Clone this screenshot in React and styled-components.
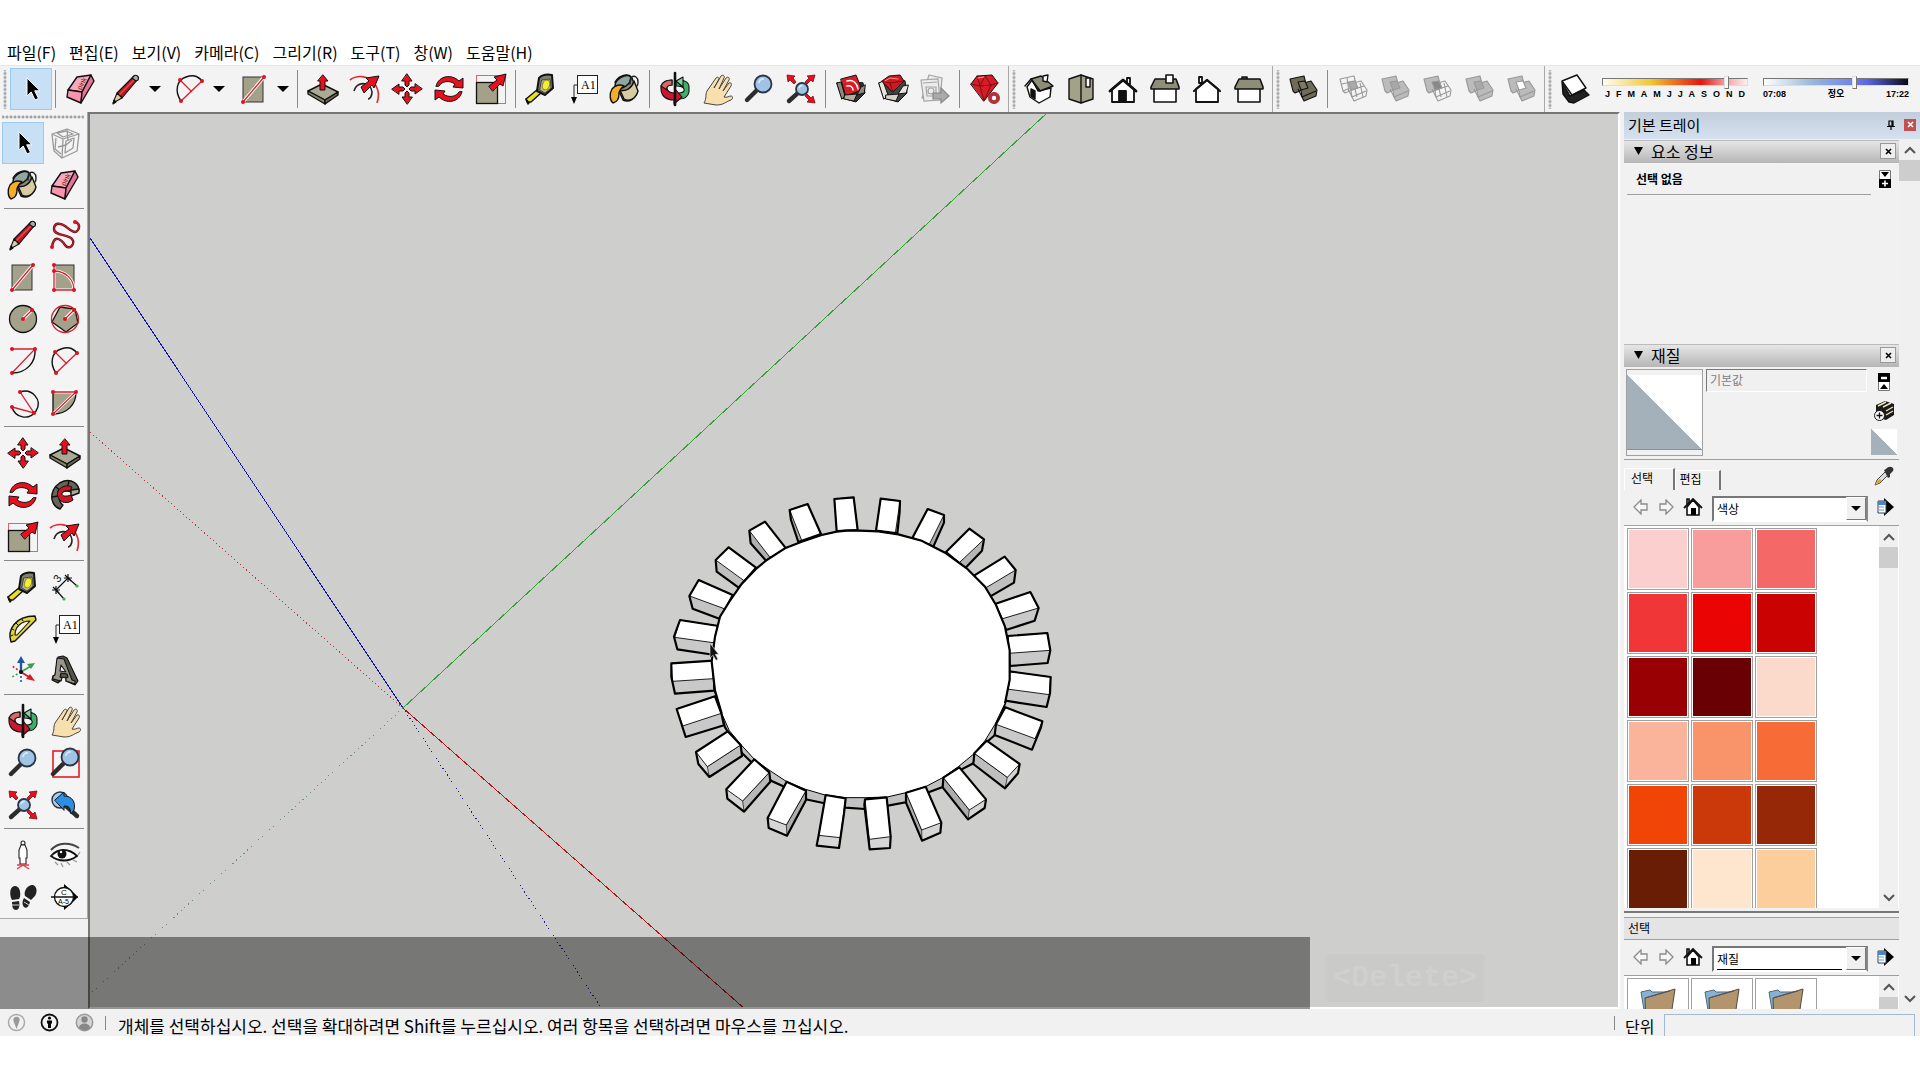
import React from "react";
import styled, { createGlobalStyle, css } from "styled-components";

const GlobalStyle = createGlobalStyle`
  * { box-sizing: border-box; }
  html, body { margin: 0; height: 100%; background: #fff; overflow: hidden; }
  body { font-family: "Noto Sans CJK KR", "Liberation Sans", sans-serif; color: #000; }
  button, input, select { font: inherit; color: inherit; margin: 0; }
`;

const App_ = styled.div`
  display: flex;
  flex-direction: column;
  height: 100vh;
  padding: 42px 0 44px;
`;

const MenuBar = styled.nav`
  display: flex;
  align-items: center;
  gap: 13px;
  height: 23px;
  padding: 0 0 3px 7px;
`;

const MenuItem = styled.button`
  padding: 0;
  border: 0;
  background: none;
  font-size: 16px;
  line-height: 20px;
  white-space: nowrap;
`;

const TopBar = styled.div`
  display: flex;
  height: 47px;
  background: #f3f3f3;
  border-top: 1px solid #e6e6e6;
`;

const ToolGroup = styled.div`
  display: flex;
  align-items: center;
  padding-right: ${(p) => (p.$last ? 0 : 2)}px;
  border-right: ${(p) => (p.$last ? 0 : 1)}px solid #a8a8a8;
  flex: ${(p) => (p.$last ? "1" : "none")};
`;

const Grip = styled.span`
  align-self: stretch;
  width: ${(p) => (p.$wide ? 10 : 9)}px;
  margin: 4px 0 3px;
  background: radial-gradient(circle, #a4a4a4 1px, transparent 2px) center / 4px 4px repeat-y;
`;

const ToolButton = styled.button`
  display: flex;
  align-items: center;
  justify-content: center;
  width: 42px;
  height: 42px;
  padding: 0 0 0 ${(p) => (p.$split ? 5 : 0)}px;
  border: 1px solid ${(p) => (p.$active ? "#99cbf3" : "transparent")};
  background: ${(p) => (p.$active ? "#c8e0f6" : "none")};
`;

const DropButton = styled.button`
  display: flex;
  align-items: center;
  justify-content: center;
  width: 22px;
  height: 42px;
  padding: 0;
  border: 0;
  background: none;
`;

const Divider = styled.span`
  width: 1px;
  height: 38px;
  margin: 0 4px 0 3px;
  background: #8a8a8a;
`;

const SunControls = styled.div`
  display: flex;
  align-items: center;
  gap: 15px;
  padding: 2px 0 0 6px;
`;

const SunField = styled.label`
  display: flex;
  flex-direction: column;
  width: 146px;
  font: bold 9px/16px "Liberation Sans", "Noto Sans CJK KR", sans-serif;
`;

const SunSlider = styled.input`
  appearance: none;
  width: 100%;
  height: 8px;
  border: 1px solid;
  border-color: #777 #ddd #ddd #777;
  background: ${(p) => p.$track};
  &::-webkit-slider-thumb {
    appearance: none;
    width: 5px;
    height: 13px;
    background: #f8f8f8;
    border: 1px solid;
    border-color: #ddd #777 #777 #ddd;
  }
`;

const Scale = styled.span`
  display: flex;
  justify-content: space-between;
  padding: 0 ${(p) => p.$inset}px;
`;

const Main = styled.main`
  position: relative;
  display: flex;
  flex: 1;
  min-height: 0;
  background: #f1f1f1;
`;

const SideBar = styled.aside`
  width: 88px;
  flex: none;
`;

const Palette = styled.div`
  padding: 0 1px 0 2px;
  background: #f4f4f4;
  border-right: 1px solid #a8a8a8;
  border-bottom: 1px solid #a8a8a8;
`;

const PaletteGrip = styled.div`
  height: 10px;
  margin-right: 2px;
  background: radial-gradient(circle, #a4a4a4 1px, transparent 2px) center / 4px 4px repeat-x;
`;

const PaletteGroup = styled.div`
  display: grid;
  grid-template-columns: 42px 42px;
  & + & { padding-top: 2px; }
  & + &::before {
    content: "";
    grid-column: 1 / -1;
    height: 1px;
    margin: 0 2px 5px;
    background: #8a8a8a;
  }
`;

const Viewport = styled.section`
  flex: 1;
  min-width: 0;
  overflow: hidden;
  background: #cececc;
  border: 2px solid;
  border-color: #777 #fff #fff #777;
  svg { display: block; width: 100%; height: 100%; }
`;

const Caption = styled.div`
  position: absolute;
  left: 0;
  bottom: 0;
  width: 1310px;
  height: 72px;
  background: rgba(0, 0, 0, 0.42);
`;

const KeyBadge = styled.div`
  position: absolute;
  left: 1325px;
  bottom: 7px;
  padding: 0 8px;
  border-radius: 5px;
  background: #cacac8;
  color: #d0d0ce;
  font: bold 30px/48px "Liberation Mono", monospace;
`;

const Tray = styled.aside`
  display: flex;
  flex-direction: column;
  flex: 0 0 300px;
  padding-left: 4px;
`;

const TrayTitle = styled.header`
  display: flex;
  align-items: center;
  gap: 9px;
  height: 27px;
  padding: 0 4px 2px 4px;
  background: linear-gradient(#c3cedd, #d6e1f0);
  font-size: 15px;
  span { flex: 1; }
`;

const PlainButton = styled.button`
  display: flex;
  align-items: center;
  justify-content: center;
  padding: 0;
  border: 0;
  background: none;
`;

const CloseTray = styled(PlainButton)`
  width: 12px;
  height: 12px;
  background: #c1504f;
`;

const TrayBody = styled.div`
  display: flex;
  flex: 1;
  min-height: 0;
`;

const Panels = styled.div`
  display: flex;
  flex: 1;
  flex-direction: column;
  min-width: 0;
  padding-top: 1px;
`;

const PanelTitle = styled.h2`
  display: flex;
  align-items: center;
  gap: 8px;
  height: 23px;
  margin: 0;
  padding: 0 3px 2px 10px;
  background: linear-gradient(#e6e6e6, #b6b6b6);
  border-top: 1px solid #bbb;
  font-size: 16px;
  font-weight: normal;
  line-height: 20px;
  span { flex: 1; }
`;

const PanelClose = styled(PlainButton)`
  width: 16px;
  height: 16px;
  border: 1px solid #999;
  background: #eee;
`;

const InfoPanel = styled.div`
  height: 181px;
  padding: 0 3px;
`;

const InfoRow = styled.div`
  display: flex;
  align-items: center;
  justify-content: space-between;
  height: 31px;
  padding: 0 5px 0 9px;
  font-size: 12px;
  font-weight: bold;
`;

const InfoRule = styled.hr`
  height: 1px;
  margin: 0 25px 0 0;
  border: 0;
  background: #a0a0a0;
`;

const MaterialTop = styled.div`
  display: flex;
  gap: 3px;
  height: 93px;
  padding: 2px 1px 0 2px;
  border-bottom: 1px solid #a0a0a0;
`;

const Preview = styled.div`
  width: 77px;
  height: 87px;
  padding: 5px 0;
  border: 1px solid #a0a0a0;
  div {
    height: 75px;
    border-bottom: 1px solid #8e8e8e;
    background: linear-gradient(to top right, #a4b1ba 50%, #fff 50%);
  }
`;

const MaterialName = styled.input`
  flex: 1;
  min-width: 0;
  height: 23px;
  padding: 0 3px 3px;
  border: 1px solid;
  border-color: #777 #fff #fff #777;
  background: #f0f0f0;
  color: #808080;
  font-size: 12px;
`;

const SideActions = styled.div`
  display: flex;
  flex-direction: column;
  align-items: center;
  gap: 6px;
  width: 28px;
  padding-top: 4px;
`;

const MiniSwatch = styled.button`
  width: 26px;
  height: 26px;
  padding: 0;
  border: 0;
  background: linear-gradient(to top right, #a4b1ba 50%, #fff 50%);
`;

const TabRow = styled.div`
  display: flex;
  align-items: flex-end;
  height: 30px;
  padding-right: 5px;
`;

const Tab = styled.button`
  width: ${(p) => (p.$active ? 51 : 46)}px;
  height: ${(p) => (p.$active ? 22 : 20)}px;
  padding: 0 14px 3px 0;
  border: 1px solid #fff;
  border-right: 2px solid #777;
  border-bottom: 0;
  background: #f1f1f1;
  font-size: 12px;
  line-height: 16px;
`;

const DropperButton = styled.button`
  align-self: flex-start;
  display: flex;
  padding: 6px 0 0;
  border: 0;
  background: none;
`;

const Spacer = styled.span`
  flex: 1;
`;

const NavRow = styled.div`
  display: flex;
  align-items: center;
  justify-content: space-between;
  height: 36px;
  padding: 0 5px 2px 9px;
  border-bottom: 1px solid #a0a0a0;
`;

const Combo = styled.label`
  position: relative;
  display: block;
  width: 156px;
  margin-top: 4px;
  select {
    appearance: none;
    width: 100%;
    height: 26px;
    padding: 0 26px 2px 3px;
    border: 2px solid;
    border-color: #777 #888 #fff #777;
    border-radius: 0;
    background: ${(p) =>
      p.$focused ? "linear-gradient(#000, #000) 3px 21px / 125px 1px no-repeat #fff" : "#fff"};
    font-size: 12px;
  }
`;

const ComboArrow = styled.span`
  position: absolute;
  top: 2px;
  right: 2px;
  display: flex;
  align-items: center;
  justify-content: center;
  width: 20px;
  height: 23px;
  border: 1px solid;
  border-color: #fff #777 #777 #fff;
  background: #f0f0f0;
  pointer-events: none;
`;

const ListBox = styled.div`
  display: flex;
  justify-content: space-between;
  overflow: hidden;
  padding-right: 1px;
  background: #fff;
  ${(p) => (p.$grow ? css`flex: 1; min-height: 0;` : css`height: 382px;`)}
`;

const SwatchGrid = styled.div`
  display: grid;
  grid-template-columns: repeat(3, 62px);
  grid-auto-rows: 62px;
  gap: 2px;
  padding: 2px 0 0 3px;
`;

const Swatch = styled.button`
  padding: 1px;
  border: 1px solid #a0a0a0;
  background: ${(p) => p.$color || "#fff"} content-box;
`;

const ScrollBar = styled.div`
  display: flex;
  flex-direction: column;
  align-items: center;
  width: ${(p) => p.$width}px;
  padding-bottom: 4px;
  background: #f0f0f0;
  flex: none;
`;

const ScrollArrow = styled(PlainButton)`
  width: 100%;
  height: ${(p) => (p.$down ? 13 : 21)}px;
  flex: none;
`;

const Thumb = styled.div`
  width: 100%;
  height: 21px;
  flex: none;
  background: #cdcdcd;
`;

const Splitter = styled.div`
  height: 10px;
  flex: none;
  border-bottom: 1px solid #a0a0a0;
  background: linear-gradient(#f1f1f1 3px, #777 3px, #777 5px, #f1f1f1 5px);
`;

const ListTitle = styled.h3`
  height: 22px;
  margin: 0;
  padding-left: 4px;
  border-bottom: 1px solid #a0a0a0;
  background: #e4e4e4;
  font-size: 12px;
  font-weight: normal;
  line-height: 20px;
`;

const StatusBar = styled.footer`
  display: flex;
  align-items: center;
  height: 27px;
  padding: 0 5px 0 1px;
  background: #f1f1f1;
  font-size: 17px;
  line-height: 24px;
  white-space: nowrap;
`;

const StatusButton = styled(PlainButton)`
  width: 35px;
  height: 24px;
  &:first-child { width: 31px; }
`;

const StatusMark = styled.span`
  width: 1px;
  height: 14px;
  margin: 0 ${(p) => (p.$right ? 10 : 12)}px 0 ${(p) => (p.$right ? 0 : 3)}px;
  background: #888;
`;

const StatusText = styled.span`
  flex: 1;
  padding-top: 5px;
  height: 27px;
`;

const Measure = styled.label`
  display: flex;
  gap: 10px;
  width: 290px;
  height: 27px;
  padding-top: 5px;
  font-size: 16px;
  input {
    flex: 1;
    min-width: 0;
    border: 1px solid #a6b9cb;
    border-bottom: 0;
    background: #f1f1f1;
  }
`;

const R = "#e8101c";
const OL = { stroke: "#111", strokeWidth: 1.4, strokeLinejoin: "round", strokeLinecap: "round" };
const RL = { stroke: "#d4202c", strokeWidth: 1.3, fill: "none" };
const TAUPE = "#a3a18a";
const Dot = ({ x, y }) => <circle cx={x} cy={y} r="2" fill="#e01020" />;
const glass = (cx, cy, r, hx, hy) => (
  <g>
    <path d={`M${cx - r * 0.7} ${cy + r * 0.7}L${hx} ${hy}`} stroke="#2c2c2c" strokeWidth="4.4" strokeLinecap="round" />
    <circle cx={cx} cy={cy} r={r} fill="#9fc4e6" stroke="#2b3644" strokeWidth="1.8" />
    <path d={`M${cx - r * 0.5} ${cy - r * 0.1}a${r * 0.55} ${r * 0.55} 0 0 1 ${r * 0.6} ${-r * 0.5}`} stroke="#d8eafa" fill="none" strokeWidth="1.6" />
  </g>
);
const solidPair = (f, s, mid, wireA, wireB) => (
  <g strokeLinejoin="round" stroke={s} strokeWidth="1.1">
    <path d="M3 6l14-3 3 12-12 5-2-2z" fill={wireA ? "none" : f} />
    <path d="M13 11l11-3 6 9-1 6-12 5-2-4z" fill={wireB ? "none" : f} />
    <path d="M15 24l14-6M15 24l-4-8" fill="none" />
    {wireA && <path d="M5 11l13-3M10 5l2 14M6 18l12-5" fill="none" />}
    {wireB && <path d="M17 12l3 12M23 10l3 14M14 17l13-4" fill="none" />}
    <path d="M11 9l7-1 3 7-7 2z" fill={mid} />
  </g>
);

const ART = {
  select: <path d="M12 5v18l4.200-4 3.800 8 3.500-1.600-3.800-7.600H25z" fill="#000" stroke="#fff" strokeWidth="1" />,
  eraser: (
    <g {...OL}>
      <path d="M12 4l14-2-9 17-14-2z" fill="#f8a8bc" />
      <path d="M3 17l14 2-1 11L2 24z" fill="#f794ae" />
      <path d="M26 2l3 6-13 22 1-11z" fill="#e87493" />
      <text x="11" y="13" fontSize="7" stroke="none" fill="#611" fontFamily="Liberation Sans" transform="rotate(-62 17 11)">pink</text>
    </g>
  ),
  pencil: (
    <g {...OL} strokeWidth="1.1">
      <path d="M7 20L24 3l4 3-16 19z" fill="#b91822" />
      <path d="M9 22L26 5" stroke="#ec4a50" strokeWidth="1.4" />
      <path d="M24 3c1-2 6 0 4 4l-2 1-4-3z" fill="#b5aaaa" />
      <path d="M7 20l5 5-9 5z" fill="#dccda6" />
      <path d="M4 27l2 2-3 2z" fill="#111" />
    </g>
  ),
  arc2: (
    <g>
      <path d="M7 28C0 18 3 7 12 4s13 0 17 5" fill="none" stroke="#111" strokeWidth="1.400" />
      <path d="M7 28L28 8M6 7l12 12" {...RL} />
      <Dot x="7" y="28" /><Dot x="28" y="8" /><Dot x="6" y="7" />
    </g>
  ),
  rect: (
    <g>
      <rect x="5" y="4" width="20" height="25" fill={TAUPE} stroke="#333" />
      <path d="M5 29L26 4" stroke="#fff" strokeWidth="3.400" />
      <path d="M5 29L26 4" {...RL} />
      <Dot x="5" y="29" /><Dot x="26" y="4" />
    </g>
  ),
  push: (
    <g {...OL}>
      <path d="M1 18l14-7 16 8-13 8z" fill="#aaa993" />
      <path d="M1 18l17 9v4L1 21z" fill="#85846f" />
      <path d="M18 27l13-8v3l-13 9z" fill="#696853" />
      <path d="M16 2l5 6h-3v9h-5V8h-2z" fill={R} strokeWidth="1" />
    </g>
  ),
  offset: (
    <g fill="none" strokeWidth="1.6">
      <path d="M1 7C14-3 35 10 28 30" stroke="#df2a35" />
      <path d="M5 18c2-10 17-10 18 1 0 4-2 7-4 7" stroke="#222" />
      <path d="M12 14l8-6-3-3 13-2-5 12-2-3-8 8z" fill={R} stroke="#111" strokeWidth="1" />
    </g>
  ),
  move: (
    <g fill={R} {...OL} strokeWidth="1">
      {[0, 90, 180, 270].map((a) => (
        <path key={a} d="M16 1l5 7h-3v4l-2 2-2-2V8h-3z" transform={`rotate(${a} 16 16)`} />
      ))}
    </g>
  ),
  rotate: (
    <g fill={R} {...OL} strokeWidth="1">
      <path d="M3 13C6 2 19 1 26 8l4-3v10l-10-1 2-3C16 7 9 8 6 13z" />
      <path d="M29 19c-3 11-16 12-23 5l-4 3V17l10 1-2 3c6 4 13 3 16-2z" />
    </g>
  ),
  scale: (
    <g>
      <rect x="1.500" y="2.500" width="29" height="28" fill="none" stroke="#e0646c" />
      <rect x="1.500" y="9.500" width="21" height="21" fill={TAUPE} stroke="#111" strokeWidth="1.300" />
      <path d="M14 13l8-6-3-3 12-3-3 12-3-2-7 7z" fill={R} {...OL} strokeWidth="1" />
    </g>
  ),
  tape: (
    <g {...OL}>
      <path d="M1 26l12-10 3 4L6 29H2z" fill="#e8dc25" />
      <path d="M1 26l3 4-1 1z" fill="#111" />
      <path d="M14 5c4-4 8-4 13-3l1 13-8 7-8-4z" fill="#7f7f72" strokeWidth="2" />
      <path d="M17 7l8-1 1 9-6 5-5-3z" fill="#bbb79c" strokeWidth=".6" />
      <ellipse cx="21" cy="12" rx="3.500" ry="5" fill="#f5ee2d" stroke="#8b8320" strokeWidth="1" transform="rotate(20 21 12)" />
    </g>
  ),
  text: (
    <g>
      <rect x="10.500" y="2.500" width="20" height="18" fill="#fff" stroke="#222" />
      <text x="14" y="16" fontSize="12" fontFamily="Liberation Serif">A1</text>
      <path d="M10 12H7v13" fill="none" stroke="#222" />
      <path d="M4 24h6l-3 7z" />
    </g>
  ),
  bucket: (
    <g {...OL}>
      <path d="M6 9C11 1 20 0 23 5l5 13c-1 8-8 12-14 9z" fill="#8d8d7c" />
      <path d="M11 17c6 2 12-2 14-9l4 10c-2 8-9 11-14 8z" fill="#d7cba1" />
      <ellipse cx="14" cy="9" rx="9" ry="5" transform="rotate(-34 14 9)" fill="#8fa7a4" />
      <path d="M21 11c-1-6 3-9 6-7s2 8 1 9" fill="none" stroke="#222" />
      <path d="M3 16c3-4 8-5 12-3-3 2-5 4-5 8s-2 8-6 9c-3-2-4-9-1-14z" fill="#f5ad27" />
    </g>
  ),
  orbit: (
    <g {...OL} strokeWidth="1.1">
      <path d="M17 8c8-2 13 1 13 6v5c-1 5-5 7-10 7v-6c4 0 6-2 5-4-1-3-4-3-8-3z" fill="#3fae69" />
      <path d="M2 13c2-5 6-6 11-6v5c-3 0-6 1-5 4 1 3 5 4 8 4v-4l7 8-8 7v-4C7 27 1 23 2 13z" fill="#cb1830" />
      <path d="M2 13c2-5 6-6 11-6v5c-4 0-6 2-5 5z" fill="#d96865" />
      <path d="M16 0v32" strokeWidth="2.600" />
      <path d="M17 8l7-4v10z" fill="#7fd3a0" />
    </g>
  ),
  pan: (
    <path d="M3 30c3-5 1-8 3-12L15 5c2-2 4 0 2 3l-4 7L20 3c2-2 4 0 3 2l-5 11 7-11c2-2 4 0 3 2l-6 11 6-8c2-1 3 1 2 3l-7 11c3 1 5-1 7-1s2 3 0 4c-6 2-7 5-15 5z" fill="#f8dfae" stroke="#444" strokeWidth="1" strokeLinejoin="round" />
  ),
  zoom: glass(20, 11, 8.500, 4, 27),
  extents: (
    <g>
      {glass(17, 16, 6, 4, 28)}
      <g fill={R} stroke="#7a0c12" strokeWidth=".8">
        <path d="M2 2l8 1-2 2 3 4-2 2-4-4-2 2z" />
        <path d="M30 2l-8 1 2 2-4 4 2 2 4-4 2 2z" />
        <path d="M30 30l-8-1 2-2-4-4 2-2 4 4 2-2z" />
      </g>
    </g>
  ),
  warehouse: (
    <g {...OL} strokeWidth="1">
      <path d="M2 10l5 15 14 4 9-9-2-10z" fill="#333" />
      <path d="M6 6l15-4 6 15-16 6z" fill="#d71d26" />
      <path d="M12 8c6-2 10 2 11 8M12 13c3-1 6 1 6 4" fill="none" stroke="#fff" strokeWidth="1.500" />
      <path d="M2 10l4-1 4 14-3 3zM30 12l-4 2-4 8 7-2z" fill="#8d8982" />
      <path d="M10 22l12-1-3 7-10-2z" fill="#b5aca0" />
    </g>
  ),
  extBox: (
    <g {...OL} strokeWidth="1">
      <path d="M2 10l5 15 14 4 9-9-2-12z" fill="#444" />
      <path d="M2 10l4-2 5 14-4 4zM31 12l-5 1-5 8 8-1z" fill="#e7e4df" />
      <path d="M5 8l7-5 11-1 4 6-11 11z" fill="#d21720" />
      <path d="M5 8l8 2 14-2M13 10l3 9" stroke="#7c0b10" fill="none" />
      <path d="M8 8l5-3 8 1" stroke="#ff8d8d" fill="none" />
      <path d="M9 22l13-1-3 7-10-2z" fill="#d7d2c8" />
    </g>
  ),
  sendLayout: (
    <g fill="#ececec" stroke="#a5a5a5" strokeWidth="1.200">
      <path d="M10 2l13 3-2 22-18-2z" /><path d="M2 7l17-1 2 21-16 1z" />
      <path d="M4 10l14-1M7 14h10v9H8z" fill="none" /><circle cx="12" cy="18" r="3" />
      <path d="M14 20h8v-5l8 8-8 7v-4h-8z" fill="#aaa" stroke="#888" />
    </g>
  ),
  extManager: (
    <g {...OL} strokeWidth="1">
      <path d="M2 11l6-8 15-1 6 8-14 18z" fill="#d81c27" />
      <path d="M2 11l9 2 11-1 7-2M11 13l4 15 7-16M8 3l3 10 5-10 6 9" fill="none" stroke="#7d0d12" />
      <path d="M9 5l6-1" stroke="#ff9b9b" />
      <circle cx="25" cy="25" r="4.500" fill="#fff" stroke="#b3323a" strokeWidth="3" strokeDasharray="2.500 1" />
      <circle cx="25" cy="25" r="3" fill="none" stroke="#b3323a" strokeWidth="1.600" />
    </g>
  ),
  iso: (
    <g {...OL} strokeWidth="1.400">
      <path d="M4 14l5-7 6 11 13-3-1 9-11 6-9-6z" fill="#fff" />
      <path d="M8 6l10-3 12 10-13 5z" fill="#8e8d78" /><path d="M8 6L2 13M8 6l9 12" fill="none" />
      <path d="M8 16l4 2v8l-4-3z" fill="#111" /><path d="M20 3l5-1-1 7-4-1z" fill="#fff" />
    </g>
  ),
  topv: (
    <g {...OL}>
      <path d="M4 6l12-4 12 4v20l-12 4-12-4z" fill={TAUPE} /><path d="M16 2v28" />
      <rect x="21" y="5" width="4" height="9" fill="#fff" />
    </g>
  ),
  front: (
    <g {...OL} strokeWidth="1.800">
      <path d="M20 5h3v6h-3z" fill="#fff" /><path d="M5 16L16 7l11 9v13H5z" fill="#fff" />
      <path d="M3 18L16 7l13 11" fill="none" strokeWidth="2.800" /><path d="M12 29V18h7v11z" fill="#111" />
    </g>
  ),
  right: (
    <g {...OL} strokeWidth="1.600">
      <path d="M5 15h22v14H5z" fill="#fff" /><path d="M6 6h21l3 8v2H2v-2z" fill="#8e8d78" />
      <path d="M17 2h7v8h-7z" fill="#fff" />
    </g>
  ),
  back: (
    <g {...OL} strokeWidth="1.800">
      <path d="M8 4h3v6H8z" fill="#fff" /><path d="M5 16L16 7l11 9v13H5z" fill="#fff" />
      <path d="M3 18L16 7l13 11" fill="none" strokeWidth="2.200" />
    </g>
  ),
  leftv: (
    <g {...OL} strokeWidth="1.600">
      <path d="M9 4h5v3H9z" fill="#777" /><path d="M5 15h22v14H5z" fill="#fff" />
      <path d="M6 6h21l3 8v2H2v-2z" fill="#8e8d78" />
    </g>
  ),
  shell: solidPair("#6f6b56", "#111", "#7d7963"),
  intersect: solidPair("#eee", "#999", "#aaa", true, true),
  union: solidPair("#bbb", "#999", "#a8a8a8"),
  subtract: solidPair("#bbb", "#999", "#888", false, true),
  trim: solidPair("#bbb", "#999", "#aaa"),
  split: solidPair("#bbb", "#999", "#fff"),
  shadow: (
    <g {...OL}>
      <path d="M3 9l8 14 14-6 5 5-15 8-5-1-6-8z" fill="#222" />
      <path d="M3 8l15-6 9 13-14 7z" fill="#fff" />
    </g>
  ),
  component: (
    <g fill="none" stroke="#999" strokeWidth="1.300" strokeLinejoin="round">
      <path d="M3 7l15-5 12 5-2 17-15 7L5 24zM3 7l11 5 16-5M14 12l-1 19" />
      <path d="M7 11l-1 11 6 5M17 14l8-3-1 10-8 5zM8 6l9-2 7 3-10 3z" />
      <path d="M9 20l8-2 6-5M18 2l1 12" />
    </g>
  ),
  freehand: (
    <g>
      <path d="M3 28c2-13 9-8 13-2s11-1 7-6S5 17 5 10 12 4 16 7s10 9 13 4-1-8-3-8" fill="none" stroke="#501016" strokeWidth="2.400" />
      <path d="M3 28c2-13 9-8 13-2s11-1 7-6S5 17 5 10 12 4 16 7s10 9 13 4-1-8-3-8" fill="none" stroke="#d51c2a" strokeWidth="1.200" />
      <Dot x="3" y="28" /><Dot x="26" y="3" />
    </g>
  ),
  rotRect: (
    <g>
      <rect x="5" y="4" width="20" height="25" fill={TAUPE} stroke="#333" />
      <path d="M5 4v25h20C25 18 16 10 5 10" stroke="#fff" strokeWidth="3" fill="none" />
      <path d="M5 4v25h20C25 18 16 10 5 10" {...RL} />
      <Dot x="5" y="4" /><Dot x="5" y="10" /><Dot x="5" y="29" /><Dot x="25" y="29" />
    </g>
  ),
  circle: (
    <g>
      <circle cx="16" cy="16" r="13.500" fill={TAUPE} stroke="#111" strokeWidth="1.300" />
      <path d="M16 16l9-9" stroke="#fff" strokeWidth="3.400" /><path d="M16 16l9-9" {...RL} />
      <Dot x="16" y="16" /><Dot x="25" y="7" />
    </g>
  ),
  polygon: (
    <g>
      <path d="M11 4l15 2 3 14-12 9L3 19z" fill={TAUPE} stroke="#111" strokeWidth="1.300" />
      <circle cx="16" cy="16" r="13.500" {...RL} />
      <path d="M16 16l9-9" stroke="#fff" strokeWidth="3.400" /><path d="M16 16l9-9" {...RL} />
      <Dot x="16" y="16" /><Dot x="25" y="7" />
    </g>
  ),
  arc: (
    <g>
      <path d="M28 4c1 13-8 24-23 24" fill="none" stroke="#111" strokeWidth="1.400" />
      <path d="M5 4h23L5 28" {...RL} /><Dot x="5" y="4" /><Dot x="28" y="4" /><Dot x="5" y="28" />
    </g>
  ),
  arc3: (
    <g>
      <path d="M13 5c12-4 23 8 16 19-7 10-21 7-24-4" fill="none" stroke="#111" strokeWidth="1.400" />
      <path d="M13 5l14 21L5 20" {...RL} /><Dot x="13" y="5" /><Dot x="27" y="26" /><Dot x="5" y="20" />
    </g>
  ),
  pie: (
    <g>
      <path d="M4 5h23c0 13-9 22-23 22z" fill={TAUPE} stroke="#111" strokeWidth="1.300" />
      <path d="M4 5h23L4 27" stroke="#fff" strokeWidth="3" fill="none" /><path d="M4 5h23L4 27" {...RL} />
      <Dot x="4" y="5" /><Dot x="27" y="5" /><Dot x="4" y="27" />
    </g>
  ),
  follow: (
    <g {...OL}>
      <path d="M11 30C-2 25 1 6 15 2c8-2 15 3 15 10l-7 3c-1-4-10-4-12 1-2 4 0 8 3 10z" fill="#66655a" />
      <path d="M22 11l8-1v4l-8 3z" fill="#aaa993" /><path d="M3 18l6-1M7 8l5 4M20 2l-2 8" fill="none" />
      <path d="M9 12c4-6 10-6 14-4l-2 4c-5-1-8 1-8 3s4 3 9 1l2 5c-5 4-12 3-14-1-2-3-2-6-1-8z" fill="#c91822" strokeWidth="1" />
    </g>
  ),
  dimension: (
    <g stroke="#111" fill="none" strokeWidth="1.200">
      <path d="M7 19L19 7M7 19l8 9M19 7l9 8" /><path d="M3 19h8M7 15v8M15 7h8M19 3v8M4 16l6 6M16 4l6 6" />
      <text x="9" y="11" textAnchor="middle" fontSize="11" stroke="none" fill="#111" fontFamily="Liberation Sans" transform="rotate(-50 9 8)">3</text>
      <circle cx="15" cy="28" r="1.600" fill="#39b54a" stroke="none" /><circle cx="28" cy="15" r="1.600" fill="#39b54a" stroke="none" />
    </g>
  ),
  protractor: (
    <g {...OL}>
      <path d="M4 29C0 17 8 3 28 3l1 4L8 28z" fill="#e5d53c" />
      <path d="M8 22c0-8 6-14 15-14L10 22z" fill="#f4f4f4" strokeWidth="1.1" />
      <path d="M4 23l2-1M5 16l2 1M9 10l2 2M15 6l1 2" strokeWidth="1" />
    </g>
  ),
  axes: (
    <g strokeWidth="1.600" fill="none">
      <path d="M14 17V7" stroke="#2454a5" strokeWidth="2.400" /><path d="M14 1l4 7h-8z" fill="#2454a5" />
      <path d="M14 17l10-6" stroke="#3d9b4b" /><path d="M28 8l-4 6-4-5z" fill="#3d9b4b" />
      <path d="M14 17l8 5" stroke="#d31e29" strokeWidth="2" /><path d="M28 26l-9-2 4-5z" fill="#d31e29" />
      <path d="M14 17v12" stroke="#2454a5" strokeDasharray="2 2" /><path d="M14 17L5 22" stroke="#3d9b4b" strokeDasharray="2 2" />
      <path d="M14 17L5 11" stroke="#d31e29" strokeDasharray="2 2" /><circle cx="14" cy="17" r="2" fill="#111" />
    </g>
  ),
  text3d: (
    <g {...OL} strokeWidth="1.1">
      <path d="M9 2l5-1 4 2 11 23-3 4-9-4v-3l-5-1v3l-3 3-6-3 1-4 2-1z" fill="#55544a" />
      <path d="M8 3l7 1 8 21 3 1v3l-9-3v-3l2-1-1-3-6-1-1 4 2 1-1 3-8-2v-3l2-1z" fill="#98968a" />
      <path d="M12 10l-1 6 6 1z" fill="#f4f4f4" />
    </g>
  ),
  zoomWin: (
    <g><rect x="4" y="4" width="26" height="26" fill="none" stroke="#e01d29" strokeWidth="1.600" />{glass(21, 10, 8.500, 4, 27)}</g>
  ),
  prev: (
    <g>
      <path d="M17 17l11 10" stroke="#2c2c2c" strokeWidth="4.400" strokeLinecap="round" />
      <circle cx="11" cy="11" r="8" fill="#a9cae8" stroke="#2b3644" strokeWidth="1.400" />
      <path d="M6 11l9-8v4c8 0 12 6 10 14l-3 4c-1-7-2-8-7-8v4z" fill="#2d8fe3" {...OL} strokeWidth="1" />
    </g>
  ),
  camera: (
    <g fill="#fff" stroke="#222" strokeWidth="1.100">
      <circle cx="16" cy="4" r="2" /><path d="M14 6h4l2 5v8h-1v6h-6v-6h-1v-8z" />
      <path d="M10 30l6-4 6 4M10 26h12" stroke="#e04048" strokeWidth="1.400" fill="none" />
    </g>
  ),
  look: (
    <g>
      <path d="M2 11C9 3 21 3 30 9" stroke="#444" strokeWidth="2" fill="none" />
      <path d="M2 17C9 9 20 9 28 17c-8 6-18 6-26 0z" fill="#fff" stroke="#111" strokeWidth="1.800" />
      <circle cx="13" cy="15" r="4.500" fill="#111" /><circle cx="12" cy="13" r="1.200" fill="#fff" />
      <path d="M6 23l3 3M12 24l2 4M18 23l3 3M24 21l4 2M29 16l2-3" stroke="#999" strokeWidth="1.300" />
    </g>
  ),
  walk: (
    <g fill="#222">
      <path d="M4 17C2 10 4 5 8 5s6 5 5 11l-1 2-7 1z" /><path d="M5 21l7-1c1 5 0 9-3 9s-4-3-4-8z" />
      <path d="M18 15c-2-6 4-12 8-11s5 8 1 12l-3 3z" /><path d="M17 17l6 4c-1 5-4 7-6 5s-2-6 0-9z" />
      <path d="M5 24h7M17 21l5 3" stroke="#fff" strokeWidth=".8" />
    </g>
  ),
  section: (
    <g>
      <path d="M15 3l7 6-7 0zM15 29l7-6h-7z" />
      <path d="M22 9l7 7-7 7z" /><circle cx="15" cy="16" r="9.500" fill="#fff" stroke="#111" strokeWidth="1.300" />
      <path d="M2 16h27" stroke="#111" strokeWidth="1.500" />
      <text x="12" y="14" fontSize="8" fontFamily="Liberation Sans">C</text>
      <text x="9" y="23" fontSize="7" fontFamily="Liberation Sans">A-5</text>
    </g>
  ),
};

const Icon = ({ name, size = 32 }) => (
  <svg width={size} height={size} viewBox="0 0 32 32" fill="none" overflow="visible" aria-hidden="true">{React.cloneElement(ART[name], ART[name].type === "g" && !ART[name].props.fill ? { fill: "#000" } : {})}</svg>
);

const Caret = ({ w = 12, h = 6 }) => (
  <svg width={w} height={h} viewBox="0 0 12 6" preserveAspectRatio="none" aria-hidden="true"><path d="M0 0h12L6 6z" /></svg>
);
const Chevron = ({ down }) => (
  <svg width="12" height="8" viewBox="0 0 12 8" fill="none" aria-hidden="true">
    <path d={down ? "M1 1l5 5 5-5" : "M1 7l5-5 5 5"} stroke="#555" strokeWidth="2" />
  </svg>
);
const Cross = ({ color = "#000", size = 7 }) => (
  <svg width={size} height={size} viewBox="0 0 7 7" aria-hidden="true"><path d="M1 1l5 5M6 1L1 6" stroke={color} strokeWidth="1.600" /></svg>
);
const NavArrow = ({ flip }) => (
  <svg width="16" height="16" viewBox="0 0 16 16" fill="#f6f6f6" stroke="#8a8a8a" strokeWidth="1.300" aria-hidden="true">
    <path d={flip ? "M15 8L8 1v4H2v6h6v4z" : "M1 8l7-7v4h6v6H8v4z"} />
  </svg>
);
const Home = () => (
  <svg width="20" height="20" viewBox="0 0 20 20" aria-hidden="true">
    <path d="M4 10l6-7 6 7v8H4zM4 2h2v5H4z" fill="#fff" stroke="#111" strokeWidth="1.600" />
    <path d="M1 11l9-9 9 9" fill="none" stroke="#111" strokeWidth="1.800" /><path d="M8 18v-7h5v7z" />
  </svg>
);
const Details = () => (
  <svg width="17" height="18" viewBox="0 0 17 18" aria-hidden="true">
    <path d="M7 0l10 9-10 9z" /><path d="M1 3h8v12H1z" fill="#fff" stroke="#345" strokeWidth="1" />
    <path d="M1 3h8v4H1z" fill="#4b83c6" /><path d="M2 9h5M2 12h5" stroke="#69c" />
  </svg>
);
const Toggle = ({ plus }) => (
  <svg width="12" height="18" viewBox="0 0 12 18" aria-hidden="true">
    <path d="M.5.5h11v17H.5z" fill="#fff" stroke="#777" />
    {plus ? <path d="M0 9h12v9H0zM2 2h8L6 7z" /> : <path d="M0 0h12v9H0zM2 16h8l-4-5z" />}
    <path d={plus ? "M3 13.500h6M6 10.500v6" : "M3 5h6"} stroke="#fff" strokeWidth={plus ? 1.600 : 2.400} />
  </svg>
);
const NewMaterial = () => (
  <svg width="22" height="26" viewBox="0 -3 22 26" aria-hidden="true">
    <path d="M3 5l9-4 9 3v11l-8 5-10-3z" fill="#1b1b16" /><path d="M5 6l8-4M10 7l8-4M13 11l7-4M13 15l7-4" stroke="#e9e4c8" strokeWidth="1.400" />
    <circle cx="6.500" cy="15.500" r="5" fill="#fff" stroke="#111" /><path d="M3.500 15.500h6M6.500 12.500v6" stroke="#111" strokeWidth="1.300" />
  </svg>
);
const Dropper = () => (
  <svg width="20" height="20" viewBox="0 0 20 20" aria-hidden="true">
    <path d="M1 19l2-5 8-8 3 3-8 8z" fill="#ddd" stroke="#444" /><path d="M1 19l2-4 3-2 2 2-3 2z" fill="#d8a839" />
    <path d="M10 4l2-1c3-4 9-2 7 2l-3 3v3l-2 1z" fill="#333" />
  </svg>
);
const Folder = () => (
  <svg width="36" height="38" viewBox="0 0 36 38" aria-hidden="true">
    <path d="M1 4l9-2 2 2 14 0v30H6z" fill="#86b3d3" stroke="#51677a" /><path d="M5 10L35 1l-5 34H6z" fill="#b3956d" stroke="#4f4a42" />
    <path d="M5 10L30 3" stroke="#556" />
  </svg>
);

const LIGHT = "#c9c9c9";
const DARK = "#adadad";
/* Each tooth: silhouette, top face, optional shaded flank, flank tone. */
const BACK_TEETH = [
  ["530,153 523,57 581,52 593,150", "530,153 523,57 581,52 593,150", null, LIGHT],
  ["648,152 662,56 720,63 719,95 712,160", "648,152 662,56 720,63 706,160", null, DARK],
  ["757,174 803,87 852,105 852,128 820,200", "757,174 803,87 852,105 808,193", null, DARK],
  ["858,216 928,146 972,178 966,212 916,264", "858,216 928,146 972,178 898,248", null, "#b6b6b6"],
  ["942,287 1034,230 1067,270 1062,308 990,350", "942,287 1034,230 1067,270 975,325", null, "#bfbfbf"],
  ["1005,372 1111,336 1136,384 1124,422 1038,450", "1005,372 1111,336 1136,384 1028,416", null, LIGHT],
  ["1043,468 1162,459 1171,511 1163,549 1049,558", "1043,468 1162,459 1171,511 1045,520", null, LIGHT],
  ["1048,574 1172,591 1170,640 1160,681 1036,662", "1048,574 1172,591 1168,644 1041,627", null, LIGHT],
  ["160,542 163,632 45,641 34,590 34,550", "160,542 160,596 38,604 34,550", null, LIGHT],
  ["176,438 60,420 42,470 52,508 165,525", "176,438 60,420 44,472 166,489", null, LIGHT],
  ["218,345 116,300 88,348 98,386 182,418", "218,345 116,300 89,348 198,388", null, "#c4c4c4"],
  ["288,263 206,202 167,240 170,275 236,323", "288,263 206,202 167,240 252,302", null, "#bfbfbf"],
  ["378,205 315,125 268,152 272,190 318,242", "378,205 315,125 268,152 330,232", null, "#b0b0b0"],
  ["483,162 443,72 389,90 393,120 415,186", "483,162 443,72 389,90 427,186", null, DARK],
];
const FRONT_TEETH = [
  ["1036,682 1147,724 1143,742 1116,809 1004,765 1008,733", "1036,682 1147,724 1125,776 1008,733", null, LIGHT],
  ["980,782 1079,852 1074,880 1035,925 940,852 943,820", "980,782 1079,852 1042,892 943,820", "943,820 1042,892 1035,925 940,852", "#bfbfbf"],
  ["898,862 978,958 974,984 924,1018 848,922 850,893", "898,862 978,958 928,990 850,893", "850,893 928,990 924,1018 848,922", DARK],
  ["797,920 844,1028 841,1058 786,1082 738,968 738,938", "797,920 844,1028 785,1050 738,938", "738,938 785,1050 786,1082 738,968", DARK],
  ["680,952 692,1070 690,1104 629,1108 613,975 615,958", "680,952 692,1070 628,1078 615,958", "615,958 628,1078 629,1108 613,975", DARK],
  ["497,945 557,955 552,1000 537,1104 470,1097 476,1066", "497,945 557,955 541,1073 476,1066", "557,955 552,1000 537,1104 541,1073", DARK],
  ["380,905 438,932 438,960 381,1067 326,1044 323,1014", "380,905 438,932 379,1035 323,1014", "438,932 438,960 381,1067 379,1035", DARK],
  ["283,838 328,877 331,905 252,995 202,956 199,928", "283,838 328,877 248,963 199,928", "328,877 331,905 252,995 248,963", "#b8b8b8"],
  ["203,754 242,795 246,828 148,891 115,852 108,816", "203,754 242,795 142,860 108,816", "242,795 246,828 148,891 142,860", "#c0c0c0"],
  ["165,649 184,700 192,736 77,771 50,687", "165,649 184,700 68,738 50,687", null, LIGHT],
];
const Tooth = ({ shape: [outline, top, flank, tone] }) => (
  <g stroke="#000" strokeLinejoin="round">
    <polygon points={outline} fill={flank ? "#d6d6d6" : tone} stroke="none" />
    {flank && <polygon points={flank} fill={tone} strokeWidth="2" />}
    <polygon points={top} fill="#fff" strokeWidth="2.600" />
    <polygon points={outline} fill="none" strokeWidth="6.500" />
  </g>
);

const Model = () => (
  <svg role="img" aria-label="모델">
    <g transform="translate(-90 -114)">
      <g fill="none" strokeWidth="1" shapeRendering="crispEdges">
        <path d="M403 708L88 235" stroke="#1414b4" />
        <path d="M403 708L1047 113" stroke="#32a032" />
        <path d="M403 708L745 1009" stroke="#b41414" />
        <path d="M403 708L89 431" stroke="#b43c3c" strokeDasharray="1 3" />
        <path d="M403 708L89 995" stroke="#6a946a" strokeDasharray="1 4" />
        <path d="M403 708L602 1009" stroke="#1e1e8c" strokeDasharray="1 3" />
      </g>
      <g transform="translate(660 480) scale(.33333)">
        {BACK_TEETH.map((t) => <Tooth key={t[0]} shape={t} />)}
        <polygon points="165,632 195,742 245,818 300,872 335,903 368,918 437,958 490,969 556,983 615,987 688,976 738,967 808,936 848,921 905,868 940,850 985,782 1005,765 1035,670" fill="#c2c2c2" stroke="#000" strokeWidth="6.500" />
        <polygon points="560,152 600,152 655,154 715,163 785,182 855,218 920,265 975,320 1008,375 1035,440 1049,510 1049,600 1035,670 1005,733 975,782 940,823 895,860 848,893 797,920 738,938 682,951 617,953 556,953 495,945 437,928 380,905 330,872 285,840 243,794 208,752 185,700 165,632 155,545 165,470 180,410 208,365 245,312 290,265 318,242 375,205 425,185 485,165 530,155" fill="#fff" stroke="#000" strokeWidth="3" />
        <polyline points="185,700 165,632 155,545 165,470 180,410 208,365 245,312 290,265 318,242 375,205 425,185 485,165 530,155 560,152 600,152 655,154 715,163 785,182 855,218 920,265 975,320 1008,375 1035,440 1049,510 1049,600 1035,670" fill="none" stroke="#000" strokeWidth="6.500" />
        {FRONT_TEETH.map((t) => <Tooth key={t[0]} shape={t} />)}
        <path d="M150 490v44l9-8 9 15 6-3-8-15h10z" fill="#111" stroke="#ddd" strokeWidth="2" />
      </g>
    </g>
  </svg>
);

const MENUS = ["파일(F)", "편집(E)", "보기(V)", "카메라(C)", "그리기(R)", "도구(T)", "창(W)", "도움말(H)"];

const TOP_GROUPS = [
  ["select*", "|", "eraser", "pencil+", "arc2+", "rect+", "|", "push", "offset", "move", "rotate", "scale", "|", "tape", "text", "bucket", "|", "orbit", "pan", "zoom", "extents", "|", "warehouse", "extBox", "sendLayout", "|", "extManager"],
  ["iso", "topv", "front", "right", "back", "leftv"],
  ["shell", "|", "intersect", "union", "subtract", "trim", "split"],
];

const SIDE_GROUPS = [
  ["select*", "component", "bucket", "eraser"],
  ["pencil", "freehand", "rect", "rotRect", "circle", "polygon", "arc", "arc2", "arc3", "pie"],
  ["move", "push", "rotate", "follow", "scale", "offset"],
  ["tape", "dimension", "protractor", "text", "axes", "text3d"],
  ["orbit", "pan", "zoom", "zoomWin", "extents", "prev"],
  ["camera", "look", "walk", "section"],
];

const COLORS = [
  "#fccfcf", "#f99c9c", "#f46868", "#f03636", "#ea0404", "#cb0202",
  "#980003", "#680004", "#fcdacb", "#f9b49b", "#f8936a", "#f66b36",
  "#f04507", "#cb380a", "#972807", "#691d05", "#fde6cd", "#fbce9b",
];

const Tool = ({ id }) => {
  if (id === "|") return <Divider />;
  const name = id.replace(/[*+]/, "");
  const split = id.endsWith("+");
  return (
    <>
      <ToolButton type="button" aria-label={name} $active={id.endsWith("*")} $split={split}><Icon name={name} /></ToolButton>
      {split && <DropButton type="button" aria-label={`${name} 옵션`}><Caret /></DropButton>}
    </>
  );
};

const Nav = ({ value, focused }) => (
  <NavRow>
    <PlainButton type="button" aria-label="뒤로"><NavArrow /></PlainButton>
    <PlainButton type="button" aria-label="앞으로"><NavArrow flip /></PlainButton>
    <PlainButton type="button" aria-label="홈"><Home /></PlainButton>
    <Combo $focused={focused}>
      <select aria-label="라이브러리" defaultValue={value}><option>{value}</option></select>
      <ComboArrow><Caret w={10} h={5} /></ComboArrow>
    </Combo>
    <PlainButton type="button" aria-label="세부 정보"><Details /></PlainButton>
  </NavRow>
);

const SectionTitle = ({ children }) => (
  <PanelTitle>
    <Caret w={9} h={8} />
    <span>{children}</span>
    <PanelClose type="button" aria-label="닫기"><Cross /></PanelClose>
  </PanelTitle>
);

export default function App() {
  return (
    <App_>
      <GlobalStyle />
      <MenuBar>{MENUS.map((m) => <MenuItem key={m} type="button">{m}</MenuItem>)}</MenuBar>
      <TopBar role="toolbar">
        {TOP_GROUPS.map((g, i) => (
          <ToolGroup key={i}>
            <Grip $wide={i === 0} />
            {g.map((id, k) => <Tool key={k} id={id} />)}
          </ToolGroup>
        ))}
        <ToolGroup $last>
          <Grip />
          <Tool id="shadow" />
          <SunControls>
            <SunField>
              <SunSlider type="range" aria-label="날짜" min="0" max="100" defaultValue="87" $track="linear-gradient(90deg, #fffef0, #f0c832 33%, #e81410 68%, #f4a0a0 85%, #fdf0f0)" />
              <Scale $inset={3}>{"JFMAMJJASOND".split("").map((m, i) => <span key={i}>{m}</span>)}</Scale>
            </SunField>
            <SunField>
              <SunSlider type="range" aria-label="시간" min="0" max="100" defaultValue="63" $track="linear-gradient(90deg, #fff, #9ab8d8 33%, #7088e8 60%, #5a64e0 72%, #0a0a14)" />
              <Scale $inset={0}><span>07:08</span><span>정오</span><span>17:22</span></Scale>
            </SunField>
          </SunControls>
        </ToolGroup>
      </TopBar>
      <Main>
        <SideBar>
          <Palette>
            <PaletteGrip />
            {SIDE_GROUPS.map((g, i) => (
              <PaletteGroup key={i}>{g.map((id) => <Tool key={id} id={id} />)}</PaletteGroup>
            ))}
          </Palette>
        </SideBar>
        <Viewport><Model /></Viewport>
        <KeyBadge>&lt;Delete&gt;</KeyBadge>
        <Tray>
          <TrayTitle>
            <span>기본 트레이</span>
            <PlainButton type="button" aria-label="고정">
              <svg width="8" height="10" viewBox="0 0 8 10" aria-hidden="true"><path d="M2 1h4v5H2zM5 1v5M0 6.500h8M4 7v3" fill="none" stroke="#000" strokeWidth="1.200" /></svg>
            </PlainButton>
            <CloseTray type="button" aria-label="트레이 닫기"><Cross color="#fff" /></CloseTray>
          </TrayTitle>
          <TrayBody>
            <Panels>
              <SectionTitle>요소 정보</SectionTitle>
              <InfoPanel>
                <InfoRow>
                  <span>선택 없음</span>
                  <PlainButton type="button" aria-label="세부 정보 표시"><Toggle plus /></PlainButton>
                </InfoRow>
                <InfoRule />
              </InfoPanel>
              <SectionTitle>재질</SectionTitle>
              <MaterialTop>
                <Preview><div /></Preview>
                <MaterialName aria-label="재질 이름" defaultValue="기본값" />
                <SideActions>
                  <PlainButton type="button" aria-label="보조 창"><Toggle /></PlainButton>
                  <PlainButton type="button" aria-label="재질 만들기"><NewMaterial /></PlainButton>
                  <MiniSwatch type="button" aria-label="기본 재질" />
                </SideActions>
              </MaterialTop>
              <TabRow>
                <Tab type="button" $active>선택</Tab>
                <Tab type="button">편집</Tab>
                <Spacer />
                <DropperButton type="button" aria-label="샘플 추출"><Dropper /></DropperButton>
              </TabRow>
              <Nav value="색상" />
              <ListBox>
                <SwatchGrid>{COLORS.map((c) => <Swatch key={c} type="button" aria-label={c} $color={c} />)}</SwatchGrid>
                <ScrollBar $width={19}>
                  <ScrollArrow type="button" aria-label="위로"><Chevron /></ScrollArrow>
                  <Thumb />
                  <Spacer />
                  <ScrollArrow type="button" $down aria-label="아래로"><Chevron down /></ScrollArrow>
                </ScrollBar>
              </ListBox>
              <Splitter />
              <ListTitle>선택</ListTitle>
              <Nav value="재질" focused />
              <ListBox $grow>
                <SwatchGrid>
                  {["폴더 1", "폴더 2", "폴더 3"].map((f) => <Swatch key={f} type="button" aria-label={f}><Folder /></Swatch>)}
                </SwatchGrid>
                <ScrollBar $width={19}>
                  <ScrollArrow type="button" aria-label="위로"><Chevron /></ScrollArrow>
                  <Thumb />
                </ScrollBar>
              </ListBox>
            </Panels>
            <ScrollBar $width={21}>
              <ScrollArrow type="button" aria-label="위로"><Chevron /></ScrollArrow>
              <Thumb />
              <Spacer />
              <ScrollArrow type="button" $down aria-label="아래로"><Chevron down /></ScrollArrow>
            </ScrollBar>
          </TrayBody>
        </Tray>
        <Caption />
      </Main>
      <StatusBar>
        <StatusButton type="button" aria-label="위치">
          <svg width="19" height="19" viewBox="0 0 19 19" aria-hidden="true"><circle cx="9.500" cy="9.500" r="8" fill="#f1f1f1" stroke="#aaa" strokeWidth="1.500" /><path d="M9.500 16L6.500 8a3.200 3.200 0 1 1 6 0z" fill="#999" /></svg>
        </StatusButton>
        <StatusButton type="button" aria-label="제작자">
          <svg width="19" height="19" viewBox="0 0 19 19" aria-hidden="true"><circle cx="9.500" cy="9.500" r="8" fill="#f1f1f1" stroke="#111" strokeWidth="1.800" /><circle cx="9.500" cy="5" r="1.600" /><path d="M7 7.500h5v3h-1V15H8v-4.500H7z" /></svg>
        </StatusButton>
        <StatusButton type="button" aria-label="로그인">
          <svg width="19" height="19" viewBox="0 0 19 19" aria-hidden="true"><circle cx="9.500" cy="9.500" r="8.200" fill="#d4d4d4" stroke="#999" strokeWidth="1.500" /><circle cx="9.500" cy="6.500" r="3.200" fill="#888" /><path d="M4 15c0-6 11-6 11 0l-3 2H7z" fill="#888" /></svg>
        </StatusButton>
        <StatusMark />
        <StatusText>개체를 선택하십시오. 선택을 확대하려면 Shift를 누르십시오. 여러 항목을 선택하려면 마우스를 끄십시오.</StatusText>
        <StatusMark $right />
        <Measure>단위<input type="text" /></Measure>
      </StatusBar>
    </App_>
  );
}
